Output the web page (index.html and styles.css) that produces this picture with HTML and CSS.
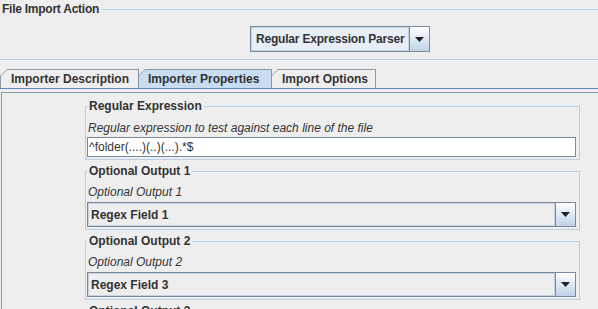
FILE: index.html
```html
<!DOCTYPE html>
<html lang="en">
<head>
    <meta charset="UTF-8">
    <meta name="viewport" content="width=device-width, initial-scale=1.0">
    <title>File Import Action</title>
    <link rel="stylesheet" href="styles.css">
</head>
<body>
    <div class="action">
        <div class="action-title"><span>File Import Action</span></div>
        <div class="action-row">
            <div class="combo combo-parser">
                <span class="combo-text">Regular Expression Parser</span>
                <span class="combo-btn"><svg width="9" height="5" viewBox="0 0 9 5"><path d="M0 0H9L4.5 5Z" fill="#222"/></svg></span>
            </div>
        </div>
    </div>

    <div class="tabs">
        <div class="tab tab-desc"><span>Importer Description</span></div>
        <div class="tab tab-props selected"><span>Importer Properties</span></div>
        <div class="tab tab-opts"><span>Import Options</span></div>
    </div>

    <div class="tab-body">
        <div class="pane">
            <div class="form">
                <fieldset class="group">
                    <legend>Regular Expression</legend>
                    <div class="hint hint-first">Regular expression to test against each line of the file</div>
                    <div class="field">^folder(....)(..)(...).*$</div>
                </fieldset>

                <fieldset class="group">
                    <legend>Optional Output 1</legend>
                    <div class="hint">Optional Output 1</div>
                    <div class="combo combo-wide">
                        <span class="combo-text">Regex Field 1</span>
                        <span class="combo-btn"><svg width="9" height="5" viewBox="0 0 9 5"><path d="M0 0H9L4.5 5Z" fill="#222"/></svg></span>
                    </div>
                </fieldset>

                <fieldset class="group">
                    <legend>Optional Output 2</legend>
                    <div class="hint">Optional Output 2</div>
                    <div class="combo combo-wide">
                        <span class="combo-text">Regex Field 3</span>
                        <span class="combo-btn"><svg width="9" height="5" viewBox="0 0 9 5"><path d="M0 0H9L4.5 5Z" fill="#222"/></svg></span>
                    </div>
                </fieldset>

                <fieldset class="group">
                    <legend>Optional Output 3</legend>
                    <div class="hint">Optional Output 3</div>
                    <div class="combo combo-wide">
                        <span class="combo-text">Regex Field 4</span>
                        <span class="combo-btn"><svg width="9" height="5" viewBox="0 0 9 5"><path d="M0 0H9L4.5 5Z" fill="#222"/></svg></span>
                    </div>
                </fieldset>
            </div>
        </div>
    </div>
</body>
</html>
```

FILE: styles.css
```css
* {
    margin: 0;
    padding: 0;
    box-sizing: border-box;
}

body {
    background: #eeeeee;
    font-family: 'Liberation Sans', Arial, sans-serif;
    font-size: 12px;
    color: #333333;
    height: 309px;
    overflow: hidden;
}

/* top titled panel */
.action {
    border-bottom: 1px solid #b8cfe5;
    padding-bottom: 7px;
}

.action-title {
    display: flex;
    align-items: center;
    height: 14px;
    margin-top: 2px;
    font-weight: bold;
}

.action-title span {
    padding: 0 4px 0 2px;
    line-height: 14px;
    letter-spacing: -0.25px;
}

.action-title::after {
    content: '';
    flex: 1;
    border-top: 1px solid #b8cfe5;
}

.action-row {
    display: flex;
    padding-left: 250px;
    margin-top: 10px;
}

/* combo boxes */
.combo {
    display: flex;
    height: 25px;
    border: 1px solid #7a8a99;
    font-weight: bold;
}

.combo-text {
    flex: 1;
    display: flex;
    align-items: center;
    padding-left: 3px;
    white-space: nowrap;
    overflow: hidden;
    box-shadow: inset 0 0 0 1px #c5d3e0;
}

.combo-btn {
    width: 20px;
    flex: none;
    display: flex;
    align-items: center;
    justify-content: center;
    border-left: 1px solid #7a8a99;
    background: linear-gradient(#ffffff 0%, #e4edf6 40%, #bfd2e7 100%);
}

.combo-parser {
    width: 180px;
    height: 26px;
}

.combo-parser .combo-text {
    padding-left: 5px;
    letter-spacing: -0.2px;
    background: #e8eef6;
}

.combo-wide {
    margin-top: 2px;
}

/* tabs */
.tabs {
    display: flex;
    margin-top: 9px;
    height: 19px;
}

.tab {
    height: 19px;
    padding: 1px 1px 0 1px;
    background: #8a99a6;
    clip-path: polygon(0 7px, 7px 0, 100% 0, 100% 100%, 0 100%);
    font-weight: bold;
    white-space: nowrap;
}

.tab + .tab {
    margin-left: -1px;
}

.tab span {
    display: block;
    height: 18px;
    line-height: 19px;
    background: #eeeeee;
    clip-path: polygon(0 6px, 6px 0, 100% 0, 100% 100%, 0 100%);
    padding-left: 10px;
}

.tab.selected span {
    background: #c8ddf2;
}

.tab-desc { width: 139px; }
.tab-props { width: 134px; }
.tab-props span { padding-left: 9px; }
.tab-opts { width: 105px; }

.tab-body {
    border-top: 1px solid #6382bf;
    padding: 3px 0 0 1px;
}

.pane {
    border-top: 1px solid #8a99a6;
    border-left: 1px solid #8a99a6;
    height: 230px;
}

.form {
    width: 495px;
    margin-left: 83px;
    padding-top: 6px;
}

/* titled groups */
.group {
    border: 1px solid #b8cfe5;
    padding: 0 3px 2px 1px;
    min-width: 0;
}

.group + .group {
    margin-top: 4px;
}

.group legend {
    font-weight: bold;
    line-height: 14px;
    padding: 0 2px;
}

.hint {
    font-style: italic;
    line-height: 16px;
    margin-top: 6px;
    padding-left: 1px;
}

.hint-first {
    margin-top: 7px;
}

.field {
    margin-top: 1px;
    height: 20px;
    line-height: 18px;
    background: #ffffff;
    border: 1px solid #7a8a99;
    padding-left: 1px;
}
```
